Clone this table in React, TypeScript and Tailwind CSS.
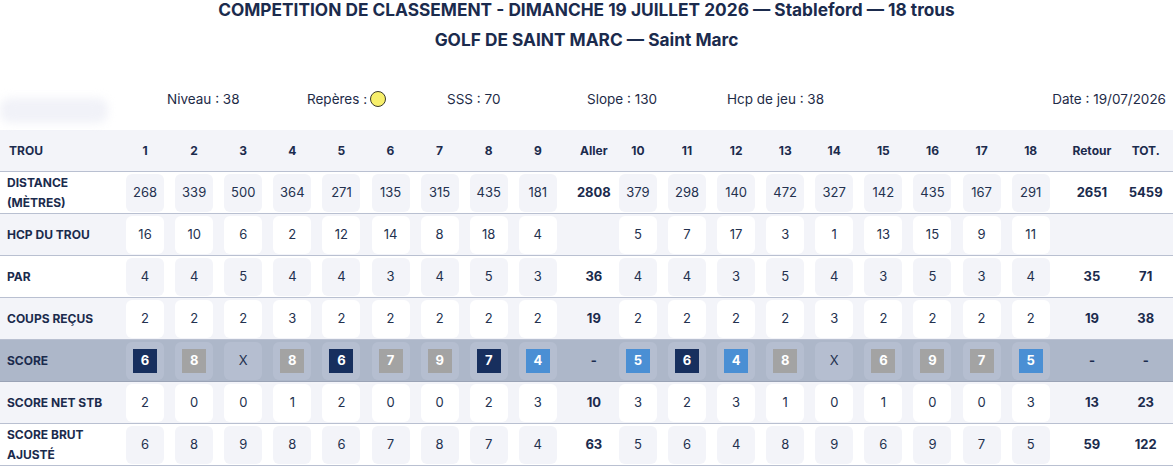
import React from 'react'

type Score = { v: string; c?: 'dark' | 'gray' | 'blue' }

const holesOut = [1, 2, 3, 4, 5, 6, 7, 8, 9]
const holesIn = [10, 11, 12, 13, 14, 15, 16, 17, 18]

const rows = [
  {
    label: ['DISTANCE', '(MÈTRES)'],
    out: ['268', '339', '500', '364', '271', '135', '315', '435', '181'],
    aller: '2808',
    inn: ['379', '298', '140', '472', '327', '142', '435', '167', '291'],
    retour: '2651',
    tot: '5459',
    striped: false,
  },
  {
    label: ['HCP DU TROU'],
    out: ['16', '10', '6', '2', '12', '14', '8', '18', '4'],
    aller: '',
    inn: ['5', '7', '17', '3', '1', '13', '15', '9', '11'],
    retour: '',
    tot: '',
    striped: true,
  },
  {
    label: ['PAR'],
    out: ['4', '4', '5', '4', '4', '3', '4', '5', '3'],
    aller: '36',
    inn: ['4', '4', '3', '5', '4', '3', '5', '3', '4'],
    retour: '35',
    tot: '71',
    striped: false,
  },
  {
    label: ['COUPS REÇUS'],
    out: ['2', '2', '2', '3', '2', '2', '2', '2', '2'],
    aller: '19',
    inn: ['2', '2', '2', '2', '3', '2', '2', '2', '2'],
    retour: '19',
    tot: '38',
    striped: true,
  },
]

const scoreOut: Score[] = [
  { v: '6', c: 'dark' }, { v: '8', c: 'gray' }, { v: 'X' }, { v: '8', c: 'gray' }, { v: '6', c: 'dark' },
  { v: '7', c: 'gray' }, { v: '9', c: 'gray' }, { v: '7', c: 'dark' }, { v: '4', c: 'blue' },
]
const scoreIn: Score[] = [
  { v: '5', c: 'blue' }, { v: '6', c: 'dark' }, { v: '4', c: 'blue' }, { v: '8', c: 'gray' }, { v: 'X' },
  { v: '6', c: 'gray' }, { v: '9', c: 'gray' }, { v: '7', c: 'gray' }, { v: '5', c: 'blue' },
]

const rowsAfter = [
  {
    label: ['SCORE NET STB'],
    out: ['2', '0', '0', '1', '2', '0', '0', '2', '3'],
    aller: '10',
    inn: ['3', '2', '3', '1', '0', '1', '0', '0', '3'],
    retour: '13',
    tot: '23',
    striped: true,
  },
  {
    label: ['SCORE BRUT', 'AJUSTÉ'],
    out: ['6', '8', '9', '8', '6', '7', '8', '7', '4'],
    aller: '63',
    inn: ['5', '6', '4', '8', '9', '6', '9', '7', '5'],
    retour: '59',
    tot: '122',
    striped: false,
  },
]

const grid =
  'grid grid-cols-[120.5px_repeat(9,49.1px)_51px_repeat(9,49.1px)_63.5px_54px] items-center'

const squareColor = {
  dark: 'bg-[#172f5e] text-white',
  gray: 'bg-[#a3a3a3] text-white',
  blue: 'bg-[#4a8fd4] text-white',
}

function Label({ lines }: { lines: string[] }) {
  return (
    <div className="pl-[7px] text-[12px] font-bold leading-[20px] text-[#1b2b4d]">
      {lines.map((l) => (
        <div key={l}>{l}</div>
      ))}
    </div>
  )
}

function Cell({ v, box }: { v: string; box: string }) {
  return (
    <div className="flex justify-center">
      <div className={`flex h-[38px] w-[38px] items-center justify-center rounded-md text-[13px] text-[#23314f] ${box}`}>
        {v}
      </div>
    </div>
  )
}

function Total({ v, pad }: { v: string; pad: string }) {
  return <div className={`text-center text-[13px] font-bold text-[#1b2b4d] ${pad}`}>{v}</div>
}

type Row = (typeof rows)[number]

function DataRow({ r }: { r: Row }) {
  const rowBg = r.striped ? 'bg-[#f3f4f9]' : 'bg-white'
  const box = r.striped ? 'bg-white' : 'bg-[#f3f4f9]'
  return (
    <div className={`${grid} h-[42px] border-b border-[#b9c0d1] ${rowBg}`}>
      <Label lines={r.label} />
      {r.out.map((v, i) => (
        <Cell key={i} v={v} box={box} />
      ))}
      <Total v={r.aller} pad="pl-[12px]" />
      {r.inn.map((v, i) => (
        <Cell key={i} v={v} box={box} />
      ))}
      <Total v={r.retour} pad="pl-[10px]" />
      <Total v={r.tot} pad="" />
    </div>
  )
}

function ScoreCell({ s }: { s: Score }) {
  return (
    <div className="flex justify-center">
      <div className="flex h-[38px] w-[38px] items-center justify-center rounded-md bg-[#b5bed0]">
        {s.c ? (
          <div className={`flex h-[24px] w-[24px] items-center justify-center text-[13px] font-bold ${squareColor[s.c]}`}>
            {s.v}
          </div>
        ) : (
          <span className="text-[13px] text-[#23314f]">{s.v}</span>
        )}
      </div>
    </div>
  )
}

export default function App() {
  return (
    <div className="w-[1173px] h-[469px] overflow-hidden bg-white font-['Inter',sans-serif] text-[#1b2b4d]">
      {/* Title */}
      <div className="text-center text-[17.3px] font-bold leading-[20px] text-[#1b2b4d]">
        <div>COMPETITION DE CLASSEMENT - DIMANCHE 19 JUILLET 2026 — Stableford — 18 trous</div>
        <div className="mt-[10px]">GOLF DE SAINT MARC — Saint Marc</div>
      </div>

      {/* Info */}
      <div className="relative mt-[39px] flex h-[41px] items-start pl-[167px] pr-[7px] text-[13.5px] leading-[20px] text-[#1e2b47]">
        <div className="absolute left-0 top-[9px] h-[25px] w-[108px] rounded-[10px] bg-[#f1f2f8] blur-[4px]" />
        <div className="w-[140px]">Niveau : 38</div>
        <div className="flex w-[140px] items-center gap-[3px]">
          Repères :
          <span className="inline-block h-[16px] w-[16px] rounded-full border border-[#3a3a2a] bg-[#f7ef6b]" />
        </div>
        <div className="w-[140px]">SSS : 70</div>
        <div className="w-[140px]">Slope : 130</div>
        <div className="w-[140px]">Hcp de jeu : 38</div>
        <div className="ml-auto">Date : 19/07/2026</div>
      </div>

      {/* Table */}
      <div>
        <div className={`${grid} h-[42px] border-b border-[#b9c0d1] bg-[#f3f4f9] text-[12px] font-bold text-[#1b2b4d]`}>
          <div className="pl-[9px]">TROU</div>
          {holesOut.map((h) => (
            <div key={h} className="text-center">{h}</div>
          ))}
          <div className="pl-[12px] text-center">Aller</div>
          {holesIn.map((h) => (
            <div key={h} className="text-center">{h}</div>
          ))}
          <div className="pl-[10px] text-center">Retour</div>
          <div className="text-center">TOT.</div>
        </div>

        {rows.map((r) => (
          <DataRow key={r.label[0]} r={r} />
        ))}

        <div className={`${grid} h-[42px] border-b border-[#9aa3b6] bg-[#adb7c9]`}>
          <Label lines={['SCORE']} />
          {scoreOut.map((s, i) => (
            <ScoreCell key={i} s={s} />
          ))}
          <Total v="-" pad="pl-[12px]" />
          {scoreIn.map((s, i) => (
            <ScoreCell key={i} s={s} />
          ))}
          <Total v="-" pad="pl-[10px]" />
          <Total v="-" pad="" />
        </div>

        {rowsAfter.map((r) => (
          <DataRow key={r.label[0]} r={r} />
        ))}
      </div>
    </div>
  )
}
